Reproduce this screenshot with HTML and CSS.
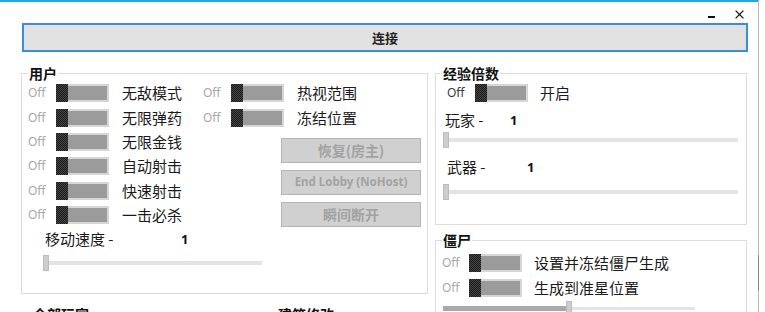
FILE: index.html
```html
<!DOCTYPE html>
<html lang="zh">
<head>
<meta charset="utf-8">
<title>Trainer</title>
<link rel="stylesheet" href="styles.css">
</head>
<body>
<div class="screen">
  <div class="window">
    <div class="titlebar">
      <span class="min"></span>
      <svg class="close" width="9" height="9" viewBox="0 0 9 9"><path d="M0.6 0.6L8.4 8.4M8.4 0.6L0.6 8.4" stroke="#111" stroke-width="1.3" fill="none"/></svg>
    </div>
    <div class="connect">连接</div>
    <div class="main">
      <div class="left-col">
        <fieldset class="group user">
          <legend>用户</legend>
          <div class="user-grid">
            <div class="col col1">
              <div class="trow"><span class="off">Off</span><span class="toggle"><span class="knob"></span><span class="fill"></span></span><span class="tlabel">无敌模式</span></div>
              <div class="trow"><span class="off">Off</span><span class="toggle"><span class="knob"></span><span class="fill"></span></span><span class="tlabel">无限弹药</span></div>
              <div class="trow"><span class="off">Off</span><span class="toggle"><span class="knob"></span><span class="fill"></span></span><span class="tlabel">无限金钱</span></div>
              <div class="trow"><span class="off">Off</span><span class="toggle"><span class="knob"></span><span class="fill"></span></span><span class="tlabel">自动射击</span></div>
              <div class="trow"><span class="off">Off</span><span class="toggle"><span class="knob"></span><span class="fill"></span></span><span class="tlabel">快速射击</span></div>
              <div class="trow"><span class="off">Off</span><span class="toggle"><span class="knob"></span><span class="fill"></span></span><span class="tlabel">一击必杀</span></div>
              <div class="vrow speed"><span class="vlabel">移动速度 -</span><span class="val">1</span></div>
              <div class="slider user-slider"><span class="thumb"></span><span class="track"></span></div>
            </div>
            <div class="col col2">
              <div class="trow"><span class="off">Off</span><span class="toggle"><span class="knob"></span><span class="fill"></span></span><span class="tlabel">热视范围</span></div>
              <div class="trow"><span class="off">Off</span><span class="toggle"><span class="knob"></span><span class="fill"></span></span><span class="tlabel">冻结位置</span></div>
              <div class="buttons">
                <button class="btn" disabled>恢复(房主)</button>
                <button class="btn latin" disabled>End Lobby (NoHost)</button>
                <button class="btn" disabled>瞬间断开</button>
              </div>
            </div>
          </div>
        </fieldset>
        <div class="sub-groups">
          <fieldset class="group sub sub1"><legend>全部玩家</legend></fieldset>
          <fieldset class="group sub sub2"><legend>建筑修改</legend></fieldset>
        </div>
      </div>
      <div class="right-col">
        <fieldset class="group exp">
          <legend>经验倍数</legend>
          <div class="trow exp-toggle"><span class="off dark">Off</span><span class="toggle"><span class="knob"></span><span class="fill"></span></span><span class="tlabel">开启</span></div>
          <div class="vrow exp-player"><span class="vlabel">玩家 -</span><span class="val">1</span></div>
          <div class="slider exp-slider s1"><span class="thumb"></span><span class="track"></span></div>
          <div class="vrow exp-weapon"><span class="vlabel">武器 -</span><span class="val">1</span></div>
          <div class="slider exp-slider s2"><span class="thumb"></span><span class="track"></span></div>
        </fieldset>
        <fieldset class="group zombie">
          <legend>僵尸</legend>
          <div class="zrows">
            <div class="trow"><span class="off">Off</span><span class="toggle"><span class="knob"></span><span class="fill"></span></span><span class="tlabel">设置并冻结僵尸生成</span></div>
            <div class="trow"><span class="off">Off</span><span class="toggle"><span class="knob"></span><span class="fill"></span></span><span class="tlabel">生成到准星位置</span></div>
          </div>
          <div class="slider zslider"><span class="zfilled"></span><span class="thumb zthumb"></span><span class="track ztrack"></span><span class="val zval">150</span></div>
        </fieldset>
      </div>
    </div>
  </div>
  <div class="edge"><span class="edge-thumb"></span></div>
</div>
</body>
</html>
```

FILE: styles.css
```css
html, body {
  margin: 0;
  padding: 0;
  background: #ffffff;
}
body {
  width: 765px;
  height: 312px;
  overflow: hidden;
  font-family: "Noto Sans", "Noto Sans CJK SC", sans-serif;
  color: #1a1a1a;
}
.screen {
  display: flex;
  width: 765px;
  height: 312px;
  overflow: hidden;
}
.window {
  width: 758px;
  height: 312px;
  flex: none;
  border-top: 2px solid #22a6de;
  box-sizing: border-box;
  overflow: hidden;
}
.edge {
  width: 1px;
  height: 312px;
  background: #b9b9b9;
  display: flex;
  flex-direction: column;
  padding-top: 255px;
  box-sizing: border-box;
}
.edge-thumb {
  display: block;
  width: 1px;
  height: 35px;
  background: #8a8a8a;
}
.titlebar {
  height: 21px;
  display: flex;
  justify-content: flex-end;
  align-items: flex-start;
  padding-right: 14px;
}
.min {
  display: block;
  width: 7px;
  height: 2px;
  background: #111;
  margin-top: 14px;
  margin-right: 20px;
}
.close {
  display: block;
  margin-top: 8px;
}
.connect {
  margin-left: 22px;
  width: 726px;
  height: 29px;
  box-sizing: border-box;
  border: 2px solid #3a8fdc;
  background: #e1e1e1;
  display: flex;
  align-items: center;
  justify-content: center;
  font-family: "Noto Sans CJK SC", sans-serif;
  font-weight: 700;
  font-size: 13px;
  color: #222;
}
.main {
  display: flex;
  gap: 5px;
  margin-top: 13px;
  padding-left: 21px;
  align-items: flex-start;
}
.left-col {
  display: flex;
  flex-direction: column;
  gap: 12px;
}
.right-col {
  display: flex;
  flex-direction: column;
  gap: 7px;
}
.group {
  margin: 0;
  padding: 0;
  min-width: 0;
  border: 1px solid #dcdcdc;
  box-sizing: border-box;
}
.group legend {
  margin-left: 6px;
  padding: 0 1px;
  font-family: "Noto Sans CJK SC", sans-serif;
  font-weight: 700;
  font-size: 14px;
  line-height: 16px;
  color: #111;
}
.user {
  width: 407px;
  height: 229px;
}
.user-grid {
  display: flex;
  padding-left: 6px;
}
.col1 {
  width: 175px;
}
.trow {
  height: 24.4px;
  display: flex;
  align-items: center;
}
.off {
  width: 28px;
  font-size: 12px;
  line-height: 14px;
  color: #a8a8a8;
}
.off.dark {
  color: #3a3a3a;
}
.toggle {
  width: 53px;
  height: 18px;
  display: flex;
  background: #d6d6d6;
  flex: none;
}
.knob {
  width: 12px;
  height: 18px;
  background: repeating-conic-gradient(#1c1c1c 0 25%, #444 0 50%) 0 0 / 2px 2px;
}
.fill {
  flex: 1;
  margin: 2px 2px 2px 0;
  background: #9b9b9b;
}
.tlabel {
  margin-left: 13px;
  font-family: "Noto Sans CJK SC", sans-serif;
  font-size: 15px;
  line-height: 18px;
  color: #1a1a1a;
  white-space: nowrap;
}
.vrow {
  display: flex;
  align-items: center;
}
.vlabel {
  font-family: "Noto Sans CJK SC", sans-serif;
  font-size: 15px;
  line-height: 18px;
  color: #1a1a1a;
  white-space: nowrap;
}
.val {
  font-family: "Noto Sans", sans-serif;
  font-weight: 700;
  font-size: 13px;
  line-height: 16px;
  color: #111;
}
.speed {
  height: 24px;
  padding-left: 17px;
}
.speed .vlabel {
  width: 136px;
}
.slider {
  display: flex;
  align-items: center;
}
.thumb {
  display: block;
  width: 6px;
  height: 16px;
  box-sizing: border-box;
  background: #cdcdcd;
  border: 1px solid #bcbcbc;
  flex: none;
}
.track {
  display: block;
  height: 4px;
  background: #e4e4e4;
  flex: none;
}
.user-slider {
  height: 24px;
  padding-left: 15px;
}
.user-slider .track {
  width: 213px;
}
.col2 {
  display: flex;
  flex-direction: column;
}
.buttons {
  margin-top: 8px;
  margin-left: 78px;
  display: flex;
  flex-direction: column;
  gap: 7px;
}
.btn {
  width: 140px;
  height: 25px;
  margin: 0;
  padding: 0;
  box-sizing: border-box;
  background: #d0d0d0;
  border: 1px solid #b4b4b4;
  font-family: "Noto Sans CJK SC", sans-serif;
  font-weight: 700;
  font-size: 14px;
  line-height: 18px;
  color: #a2a2a2;
}
.btn.latin {
  font-family: "Noto Sans", sans-serif;
  font-size: 11.5px;
}
.sub-groups {
  display: flex;
  padding-left: 4px;
}
.sub {
  height: 40px;
}
.sub1 {
  width: 240px;
}
.sub2 {
  width: 160px;
  margin-left: 5px;
}
.exp {
  width: 312px;
  height: 160px;
}
.exp-toggle {
  height: 24px;
  padding-left: 11px;
}
.exp-toggle .tlabel {
  margin-left: 12px;
}
.exp-player {
  margin-top: 5px;
  height: 20px;
  padding-left: 9px;
}
.exp-player .vlabel {
  width: 65px;
}
.exp-weapon {
  margin-top: 9px;
  height: 20px;
  padding-left: 11px;
}
.exp-weapon .vlabel {
  width: 80px;
}
.exp-slider {
  padding-left: 7px;
}
.exp-slider.s1 {
  margin-top: 2px;
}
.exp-slider.s2 {
  margin-top: 7px;
}
.exp-slider .track {
  width: 289px;
}
.zombie {
  width: 312px;
  height: 90px;
}
.zrows {
  padding-top: 3px;
  padding-left: 6px;
}
.zrows .off {
  width: 27px;
}
.zrows .tlabel {
  margin-left: 12px;
}
.zslider {
  padding-left: 7px;
  margin-top: 1px;
  align-items: flex-start;
}
.zthumb {
  height: 18px;
}
.zfilled {
  display: block;
  width: 123px;
  height: 5px;
  margin-top: 5px;
  background: #a9a9a9;
}
.ztrack {
  width: 123px;
  margin-top: 6px;
  height: 3px;
}
.zval {
  margin-left: 11px;
  margin-top: 7px;
}
```
